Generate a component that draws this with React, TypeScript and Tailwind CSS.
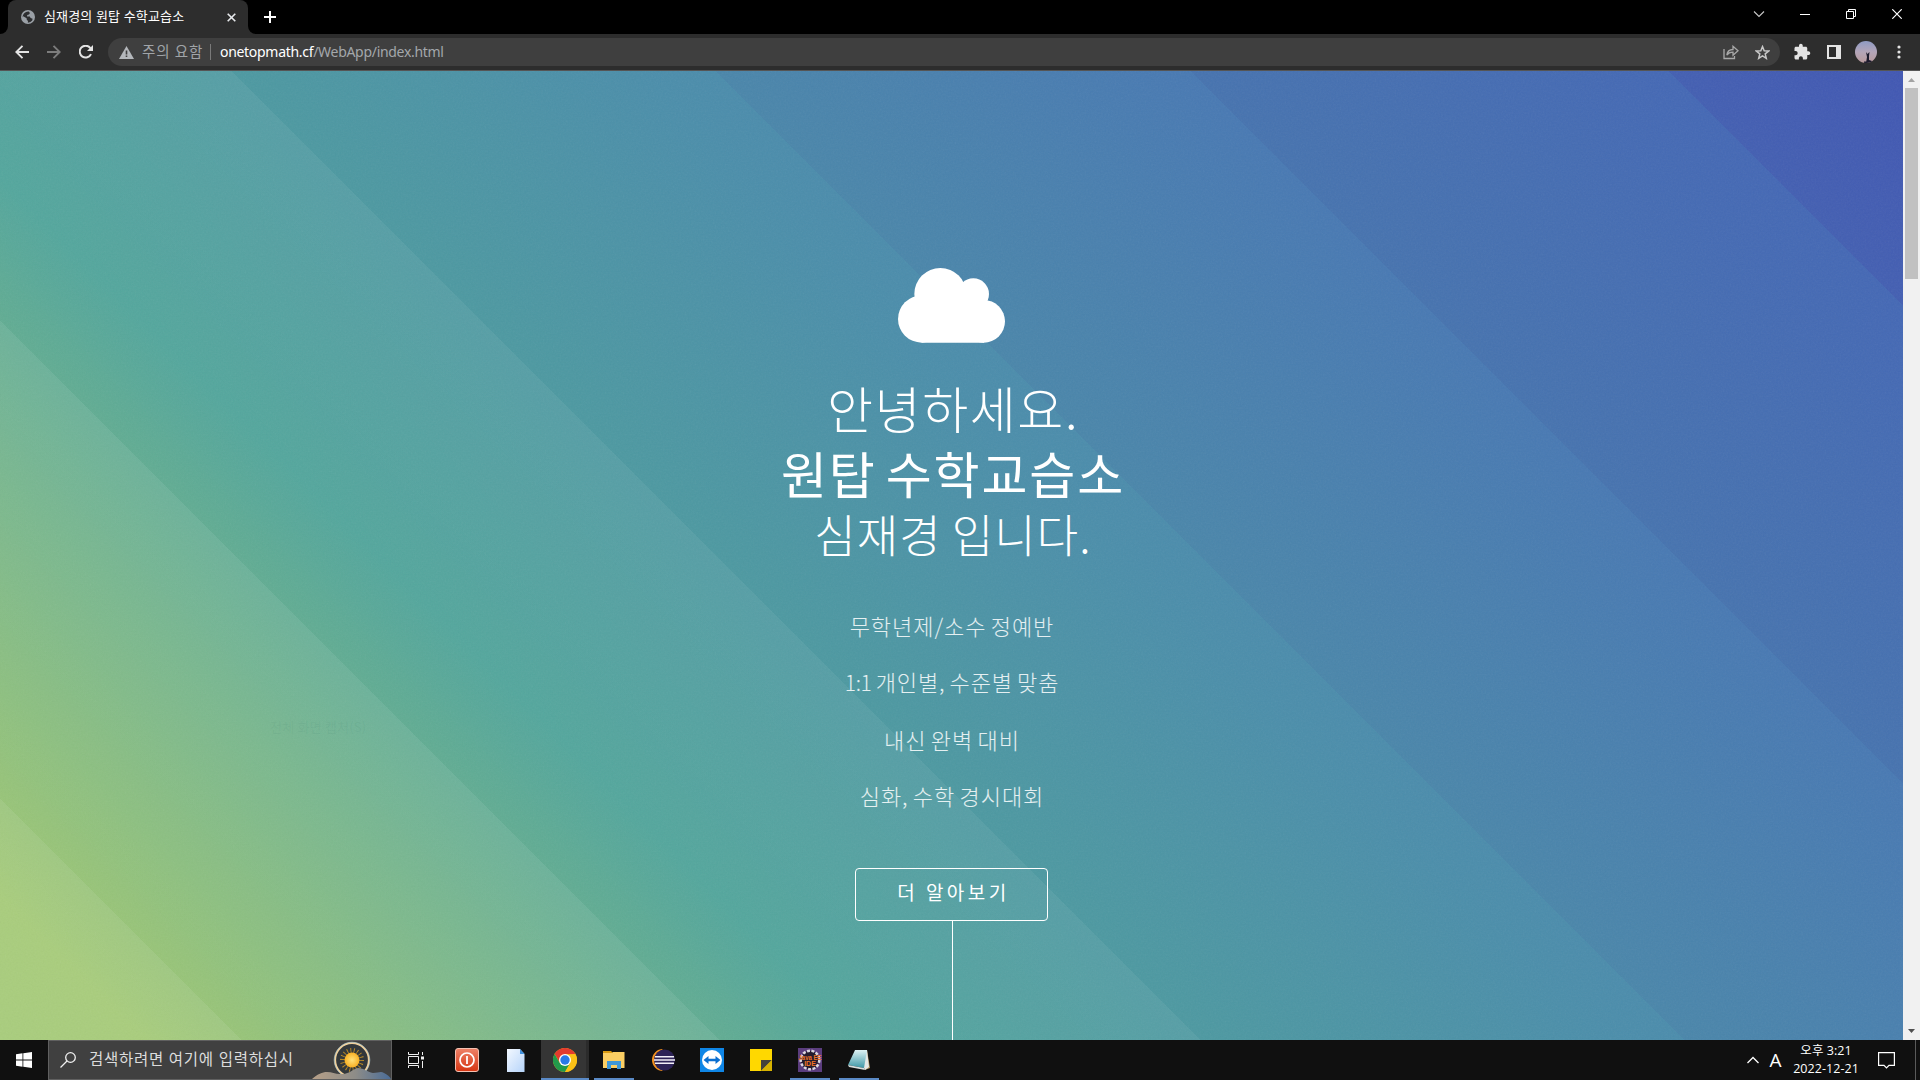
import React from "react";

const UI = "font-['Open_Sans','Noto_Sans_CJK_KR',sans-serif]";

function Cloud() {
  return (
    <svg className="mx-auto block h-[75px] w-[107px]" viewBox="414 53 321 225" fill="#fff">
      <circle cx="541" cy="131" r="78" />
      <circle cx="640" cy="131" r="47" />
      <circle cx="485" cy="206" r="71" />
      <circle cx="671" cy="213" r="64" />
      <path d="M485 277V140H672V277Z" />
    </svg>
  );
}

function Globe() {
  return (
    <svg className="h-[14px] w-[14px] shrink-0" viewBox="0 0 14 14">
      <circle cx="7" cy="7" r="7" fill="#9aa0a6" />
      <path d="M7.4 1.5 8.8 3 7.7 4.4 6 5 5.8 6.4 8.6 6.6 9.4 8 11.4 8.8 11 10.4 9.2 12 6.6 12.8 6.8 11 5.6 9.8 5.4 8.2 2 6.2 1.3 7.6A5.8 5.8 0 0 1 7.4 1.5Z" fill="#2d2e30" transform="translate(.2 0)" />
    </svg>
  );
}

function TabStrip() {
  return (
    <div className="flex h-[34px] shrink-0 items-start bg-black">
      <div className="flex h-[34px] w-2 items-end bg-[#2d2d2d]">
        <div className="h-[34px] w-2 rounded-br-[8px] bg-black" />
      </div>
      <div className="flex h-[34px] w-[240px] items-center rounded-t-[8px] bg-[#2d2d2d] pl-[13px]">
        <Globe />
        <span className="ml-[9px] w-[170px] whitespace-nowrap pb-[2px] text-[13px] leading-5 tracking-[0.15px] text-white">심재경의 원탑 수학교습소</span>
        <svg className="ml-[13px] h-[9px] w-[9px]" viewBox="0 0 9 9" stroke="#e8eaed" strokeWidth="1.6">
          <path d="M.7.7 8.3 8.3M8.3.7.7 8.3" />
        </svg>
      </div>
      <div className="h-[34px] w-2 bg-[#2d2d2d]">
        <div className="h-[34px] w-2 rounded-bl-[8px] bg-black" />
      </div>
      <svg className="ml-[8px] mt-[11px] h-3 w-3" viewBox="0 0 12 12" stroke="#fff" strokeWidth="2">
        <path d="M6 0V12M0 6H12" />
      </svg>
      <div className="ml-auto flex h-[28px] items-center">
        <svg className="h-[10px] w-[12px]" viewBox="0 0 12 10" fill="none" stroke="#c8c8c8" strokeWidth="1.1"><path d="M1 2.5 6 7.5 11 2.5" /></svg>
        <svg className="ml-[35px] h-[10px] w-[10px]" viewBox="0 0 10 10" stroke="#fff"><path d="M0 5.5H10" /></svg>
        <svg className="ml-[36px] h-[10px] w-[10px]" viewBox="0 0 10 10" fill="none" stroke="#fff"><path d="M.5 2.5H7.5V9.5H.5ZM2.5 2.5V.5H9.5V7.5H7.5" /></svg>
        <svg className="ml-[36px] mr-[18px] h-[10px] w-[10px]" viewBox="0 0 10 10" stroke="#fff" strokeWidth="1.2"><path d="M.3.3 9.7 9.7M9.7.3.3 9.7" /></svg>
      </div>
    </div>
  );
}

function Toolbar() {
  return (
    <div className="flex h-[37px] shrink-0 items-center border-b border-[#555] bg-[#2d2d2d] pl-[15px]">
      <svg className="h-[14px] w-[14px]" viewBox="0 0 14 14" fill="none" stroke="#e4e4e4" strokeWidth="1.9"><path d="M14 7H1.5M7.5.8 1.3 7 7.5 13.2" /></svg>
      <svg className="ml-[18px] h-[14px] w-[14px]" viewBox="0 0 14 14" fill="none" stroke="#7c7c7c" strokeWidth="1.9"><path d="M0 7H12.5M6.5.8 12.7 7 6.5 13.2" /></svg>
      <svg className="ml-[18px] h-[14px] w-[14px]" viewBox="0 0 14 14"><path d="M12 9.1A5.9 5.9 0 1 1 11.2 2.9L13 4.7" fill="none" stroke="#e4e4e4" strokeWidth="2" /><path d="M14 0V6H8Z" fill="#e4e4e4" /></svg>
      <div className="ml-[15px] flex h-7 w-[1672px] items-center rounded-full bg-[#3f3f3f] pl-[11px] pr-[10px] text-[14px]">
        <svg className="h-[13px] w-[15px]" viewBox="0 0 15 13"><path d="M7.5 0 15 13H0Z" fill="#b4b7bb" /><path d="M6.7 4.5H8.3V8.5H6.7ZM6.7 9.6H8.3V11.1H6.7Z" fill="#3f3f3f" /></svg>
        <span className="ml-[8px] w-[62px] whitespace-nowrap pb-px text-[14.5px] leading-5 tracking-[0.8px] text-[#a0a4a8]">주의 요함</span>
        <span className="ml-[6px] h-4 w-px bg-[#7a7a7a]" />
        <span className="ml-[9px] whitespace-nowrap pb-px font-['Noto_Sans',sans-serif] text-[14px] tracking-[-0.3px] text-[#a3a7ab]"><span className="text-white">onetopmath.cf</span>/WebApp/index.html</span>
        <svg className="ml-auto h-[15px] w-[16px]" viewBox="0 0 16 15" fill="none" stroke="#a8a8a8" strokeWidth="1.3"><path d="M1 4V13.5H11.5V11" /><path d="M3.8 10C4.3 6.5 6.5 4.6 10 4.5V1.3L15 5.8 10 10.2V7.2C7.3 7.1 5.3 8 3.8 10Z" /></svg>
        <svg className="ml-[16px] h-[15px] w-[15px]" viewBox="0 0 15 15" fill="none" stroke="#c8c8c8" strokeWidth="1.5"><path d="M7.5 1.6 9.2 5.7 13.7 6 10.2 8.9 11.3 13.3 7.5 10.9 3.7 13.3 4.8 8.9 1.3 6 5.8 5.7Z" /></svg>
      </div>
      <svg className="ml-[13px] h-[18px] w-[18px]" viewBox="0 0 24 24" fill="#e4e4e4"><path d="M20.5 11H19V7c0-1.100-.9-2-2-2h-4V3.500C13 2.120 11.880 1 10.500 1S8 2.120 8 3.500V5H4c-1.100 0-1.990.9-1.990 2v3.800H3.500c1.490 0 2.700 1.210 2.700 2.700s-1.210 2.700-2.700 2.700H2V20c0 1.100.9 2 2 2h3.800v-1.500c0-1.490 1.210-2.700 2.700-2.700s2.700 1.210 2.700 2.700V22H17c1.100 0 2-.9 2-2v-4h1.500c1.380 0 2.500-1.120 2.500-2.500S21.880 11 20.500 11z" /></svg>
      <svg className="ml-[16px] h-[14px] w-[14px]" viewBox="0 0 14 14"><path d="M0 0H14V14H0ZM2 2V12H9V2Z" fill="#e4e4e4" fillRule="evenodd" /></svg>
      <div className="ml-[14px] flex h-[22px] w-[22px] items-end justify-center overflow-hidden rounded-full bg-gradient-to-b from-[#8f9bc4] via-[#b3a5b8] to-[#b99a9c]">
        <svg className="h-[11px] w-[14px]" viewBox="0 0 14 11" fill="#1c1a2c"><path d="M7 11 8 5 7 0 8.500 2 10.500 0 10 4 10 8 13 9V11ZM5 9.500H13V11H5Z" /></svg>
      </div>
      <svg className="ml-[20px] h-[14px] w-[4px]" viewBox="0 0 4 14" fill="#e4e4e4"><circle cx="2" cy="2" r="1.600" /><circle cx="2" cy="7" r="1.600" /><circle cx="2" cy="12" r="1.600" /></svg>
    </div>
  );
}

function Hero() {
  return (
    <main className="relative flex-1 overflow-hidden bg-[linear-gradient(45deg,rgba(255,255,255,0.12)_0,rgba(255,255,255,0.12)_171px,rgba(255,255,255,0.05)_171px,rgba(255,255,255,0.09)_509px,rgba(255,255,255,0.02)_509px,rgba(255,255,255,0.055)_849px,rgba(255,255,255,0)_849px),linear-gradient(45deg,#9dc66b_5%,#4fa49a_30%,#4d99a1_849px,#4b8cac_1191px,#4a86aa_1191px,#4879b3_1527px,#4673af_1527px,#4468b5_1865px,#435fb2_1865px,#4157b3_100%)]">
      <svg className="pointer-events-none absolute inset-0 h-full w-full opacity-[0.07]">
        <filter id="grain"><feTurbulence type="fractalNoise" baseFrequency="0.6" numOctaves="2" seed="4" /><feColorMatrix type="saturate" values="0" /></filter>
        <rect width="100%" height="100%" filter="url(#grain)" />
      </svg>
      <span className="absolute left-[270px] top-[646px] whitespace-nowrap font-['Noto_Sans_CJK_KR',sans-serif] text-[13px] leading-5 tracking-[0.2px] text-[#3f7f6c]/10">전체 화면 캡처(S)</span>
      <div className="relative flex h-full flex-col items-center pt-[197px] text-center font-['Noto_Sans_CJK_KR',sans-serif] font-light text-white">
        <Cloud />
        <h1 className="mt-[32px] whitespace-nowrap pl-[3px]">
          <span className="block h-16 text-[50px] leading-[64px] tracking-[1.6px]">안녕하세요.</span>
          <strong className="block h-[67px] text-[50px] font-normal leading-[66px] tracking-[1.850px] [word-spacing:-4px]">원탑 수학교습소</strong>
          <span className="block h-14 text-[45px] leading-[56px] tracking-[1.100px] [word-spacing:-1px]">심재경 입니다.</span>
        </h1>
        <div className="mt-[35px] whitespace-nowrap pl-px text-[22px] leading-[56.4px] tracking-[0.95px] text-white/85 [word-spacing:-1.500px]">
          <p>무학년제/소수 정예반</p>
          <p className="tracking-[0.850px] [word-spacing:-1.500px]"><span className="text-[21px] tracking-[-0.300px]">1:1</span> 개인별, 수준별 맞춤</p>
          <p>내신 완벽 대비</p>
          <p>심화, 수학 경시대회</p>
        </div>
        <button className="mt-[44px] h-[53px] w-[193px] shrink-0 rounded-[4px] border border-white pb-[6px] pl-[4px] text-[19px] font-normal leading-none tracking-[3.500px]">더 알아보기</button>
        <div className="ml-[2px] w-px flex-1 bg-white" />
      </div>
    </main>
  );
}

function ScrollBar() {
  return (
    <div className="flex w-[17px] flex-col items-center bg-[#f1f1f1]">
      <svg className="h-[17px] w-[17px]" viewBox="0 0 17 17"><path d="M8.500 7 12 11H5Z" fill="#a3a3a3" /></svg>
      <div className="h-[191px] w-[13px] bg-[#c1c1c1]" />
      <svg className="mt-auto h-[17px] w-[17px]" viewBox="0 0 17 17"><path d="M5 6H12L8.500 10Z" fill="#505050" /></svg>
    </div>
  );
}

function SunArt() {
  return (
    <svg className="h-[38px] w-[79px]" viewBox="0 0 79 38">
      <defs>
        <radialGradient id="sun"><stop offset="0" stopColor="#ffe27a" /><stop offset="1" stopColor="#f8b023" /></radialGradient>
        <linearGradient id="hill"><stop offset="0" stopColor="#b7a088" /><stop offset=".55" stopColor="#8d8c88" /><stop offset="1" stopColor="#4a6c97" /></linearGradient>
      </defs>
      <circle cx="40" cy="19" r="16.800" fill="#33383b" stroke="#f0cf9a" strokeWidth="1.800" />
      <circle cx="40" cy="19" r="17.800" fill="none" stroke="#b9dbe6" strokeWidth=".6" />
      <circle cx="40" cy="19" r="9.500" fill="none" stroke="#b98a26" strokeWidth="5" strokeDasharray=".9 2.400" />
      <circle cx="40" cy="19" r="7.500" fill="url(#sun)" />
      <path d="M0 38C6 33 10 31 15 31 20 31 23 33 28 33 36 34 41 28 46 27 52 27 55 31 61 32 66 32 69 30 72 32 76 34 78 36 79 38Z" fill="url(#hill)" />
    </svg>
  );
}

function Task({ children, open, active }: { children: React.ReactNode; open?: boolean; active?: boolean }) {
  return (
    <div className={"flex h-10 w-12 flex-col items-center " + (active ? "border-r-[3px] border-[#2b2b2b] bg-[#353535]" : "")}>
      <div className="flex h-[38px] items-center justify-center pt-[2px]">{children}</div>
      {open && <div className={"h-[2px] shrink-0 bg-[#5a8ac6] " + (active ? "ml-[3px] w-12" : "w-10")} />}
    </div>
  );
}

function TaskBar() {
  return (
    <footer className="flex h-10 shrink-0 bg-[#101010]">
      <div className="flex w-12 items-center justify-center">
        <svg className="h-4 w-4" viewBox="0 0 16 16" fill="#fff"><path d="M0 2.200 6.500 1.300V7.600H0ZM7.300 1.200 16 0V7.600H7.300ZM0 8.400H6.500V14.700L0 13.800ZM7.300 8.400H16V16L7.300 14.800Z" /></svg>
      </div>
      <div className="flex w-[344px] items-center border border-[#606060] bg-[#404040] pl-[11px]">
        <svg className="h-4 w-4" viewBox="0 0 16 16" fill="none" stroke="#f0f0f0" strokeWidth="1.300"><circle cx="10.500" cy="5.500" r="4.800" /><path d="M7 9 .5 15.500" /></svg>
        <span className="ml-[13px] whitespace-nowrap text-[15.500px] tracking-[0.750px] text-[#dcdcdc]">검색하려면 여기에 입력하십시</span>
        <div className="ml-auto"><SunArt /></div>
      </div>
      <Task>
        <svg className="h-4 w-4" viewBox="0 0 16 16" fill="none" stroke="#f0f0f0"><path d="M.5 0V2.500H10.500V0M.5 16V13.500H10.500V16M.5 4.500H10.500V11.500H.5ZM14.500 0V3M14.500 9V16" /><path d="M13 4.500H16V7.500H13Z" fill="#f0f0f0" stroke="none" /></svg>
      </Task>
      <Task>
        <svg className="ml-[6px] h-6 w-6" viewBox="0 0 24 24"><defs><linearGradient id="red" x2="0" y2="1"><stop stopColor="#ee8268" /><stop offset="1" stopColor="#d63512" /></linearGradient></defs><rect x=".5" y=".5" width="23" height="23" rx="2.500" fill="url(#red)" stroke="#f4c1b2" /><circle cx="12" cy="12" r="7" fill="none" stroke="#fff" strokeWidth="1.700" /><path d="M12 8V16" stroke="#fff" strokeWidth="1.800" /></svg>
      </Task>
      <Task>
        <svg className="ml-[7px] h-[23px] w-[18px]" viewBox="0 0 18 23"><defs><linearGradient id="doc" x2="1" y2="1"><stop stopColor="#f3f8ff" /><stop offset="1" stopColor="#b6d4fa" /></linearGradient></defs><path d="M0 0H13L17.500 5V23H0Z" fill="url(#doc)" /><path d="M13 0V5H17.500Z" fill="#3f91de" /></svg>
      </Task>
      <div className="ml-[5px] flex gap-px">
        <Task active open>
          <svg className="ml-[3px] h-6 w-6" viewBox="0 0 24 24">
            <circle cx="12" cy="12" r="12" fill="#fbc116" />
            <path d="M1.600 6A12 12 0 0 1 22.400 6L12 6.500 7 15Z" fill="#e33b2e" />
            <path d="M1.600 6A12 12 0 0 0 12 24L17.300 15 12 17 6.800 15Z" fill="#229a4b" />
            <path d="M12 6.500H22.700A12 12 0 0 1 12 24L17.200 15Z" fill="#fbc116" />
            <circle cx="12" cy="12" r="6" fill="#fff" /><circle cx="12" cy="12" r="4.700" fill="#2979e8" />
          </svg>
        </Task>
        <Task open>
          <svg className="h-[20px] w-[22px]" viewBox="0 0 22 20"><path d="M0 1H8L10 3H0Z" fill="#d99a12" /><path d="M0 3H9L10 2H21.500V18H0Z" fill="#fbce63" /><path d="M4 11H18V19H14V15H8V19H4Z" fill="#3f97d6" /></svg>
        </Task>
        <Task>
          <svg className="h-6 w-6" viewBox="0 0 24 24"><path d="M12 1A11 11 0 0 0 12 23 13 13 0 0 1 12 1Z" fill="#f5921e" /><circle cx="13.500" cy="12" r="10.500" fill="#2d2357" /><path d="M4 8.800H23M3 12H24M4 15.200H23" stroke="#f2eff8" strokeWidth="1.600" /></svg>
        </Task>
        <Task>
          <svg className="h-6 w-6" viewBox="0 0 24 24"><path d="M0 0H24V24H0Z" fill="#0f86e6" /><circle cx="12" cy="12" r="10" fill="#fff" /><path d="M3.500 12 8.500 8V10.800H15.500V8L20.500 12 15.500 16V13.200H8.500V16Z" fill="#0b6fd0" /></svg>
        </Task>
        <Task>
          <svg className="h-[22px] w-[22px]" viewBox="0 0 22 22"><path d="M0 0H22V22H0Z" fill="#ffd800" /><path d="M11 11H22L11 22Z" fill="#45433c" /><path d="M22 11V22H11Z" fill="#d8b300" /></svg>
        </Task>
        <Task open>
          <svg className="h-6 w-6 overflow-visible" viewBox="0 0 24 24"><path d="M0 0H24V24H0Z" fill="#5b3d7e" /><circle cx="12" cy="12" r="9.300" fill="#241c2e" stroke="#dcd8df" strokeWidth="2.500" strokeDasharray="3 1.500" /><text x="12" y="11.500" textAnchor="middle" textLength="23" lengthAdjust="spacingAndGlyphs" fontSize="7.500" fontWeight="bold" fill="#ef7425" fontFamily="Liberation Sans">Java EE</text><text x="12" y="18" textAnchor="middle" fontSize="7" fontWeight="bold" fill="#ef7425" fontFamily="Liberation Sans">IDE</text></svg>
        </Task>
        <Task open>
          <svg className="h-6 w-6" viewBox="0 0 24 24"><defs><linearGradient id="pad" x2="0" y2="1"><stop stopColor="#dff3f4" /><stop offset="1" stopColor="#3d97a6" /></linearGradient></defs><path d="M20 2 23 20 18 22Z" fill="#b79a68" /><path d="M8 2 20 2 22 19 18 22Z" fill="#e5e8e6" /><path d="M8 2H20L17 20 1 17Z" fill="url(#pad)" /><path d="M1 17 17 20 18 22 2 19Z" fill="#d7dedd" /></svg>
        </Task>
      </div>
      <div className="ml-auto flex items-center text-white">
        <svg className="h-[8px] w-[12px]" viewBox="0 0 12 8" fill="none" stroke="#fff" strokeWidth="1.300"><path d="M.5 7 6 1.500 11.500 7" /></svg>
        <span className="ml-[10px] w-[13px] text-center text-[19px] leading-none">A</span>
        <div className="ml-[10px] w-[68px] whitespace-nowrap text-center text-[12.500px] leading-[18px] tracking-[0.050px]"><div>오후 3:21</div><div>2022-12-21</div></div>
        <svg className="ml-[18px] h-[17px] w-[17px]" viewBox="0 0 17 17" fill="none" stroke="#fff" strokeWidth="1.200"><path d="M.6.600H16.400V13.400H11L8.500 16 6 13.400H.6Z" /></svg>
        <div className="ml-[20px] mr-[4px] h-10 w-px bg-[#5a5a5a]" />
      </div>
    </footer>
  );
}

export default function App() {
  return (
    <div className={"flex h-[1080px] w-[1920px] flex-col overflow-hidden bg-black " + UI}>
      <TabStrip />
      <Toolbar />
      <div className="flex min-h-0 flex-1">
        <Hero />
        <ScrollBar />
      </div>
      <TaskBar />
    </div>
  );
}
